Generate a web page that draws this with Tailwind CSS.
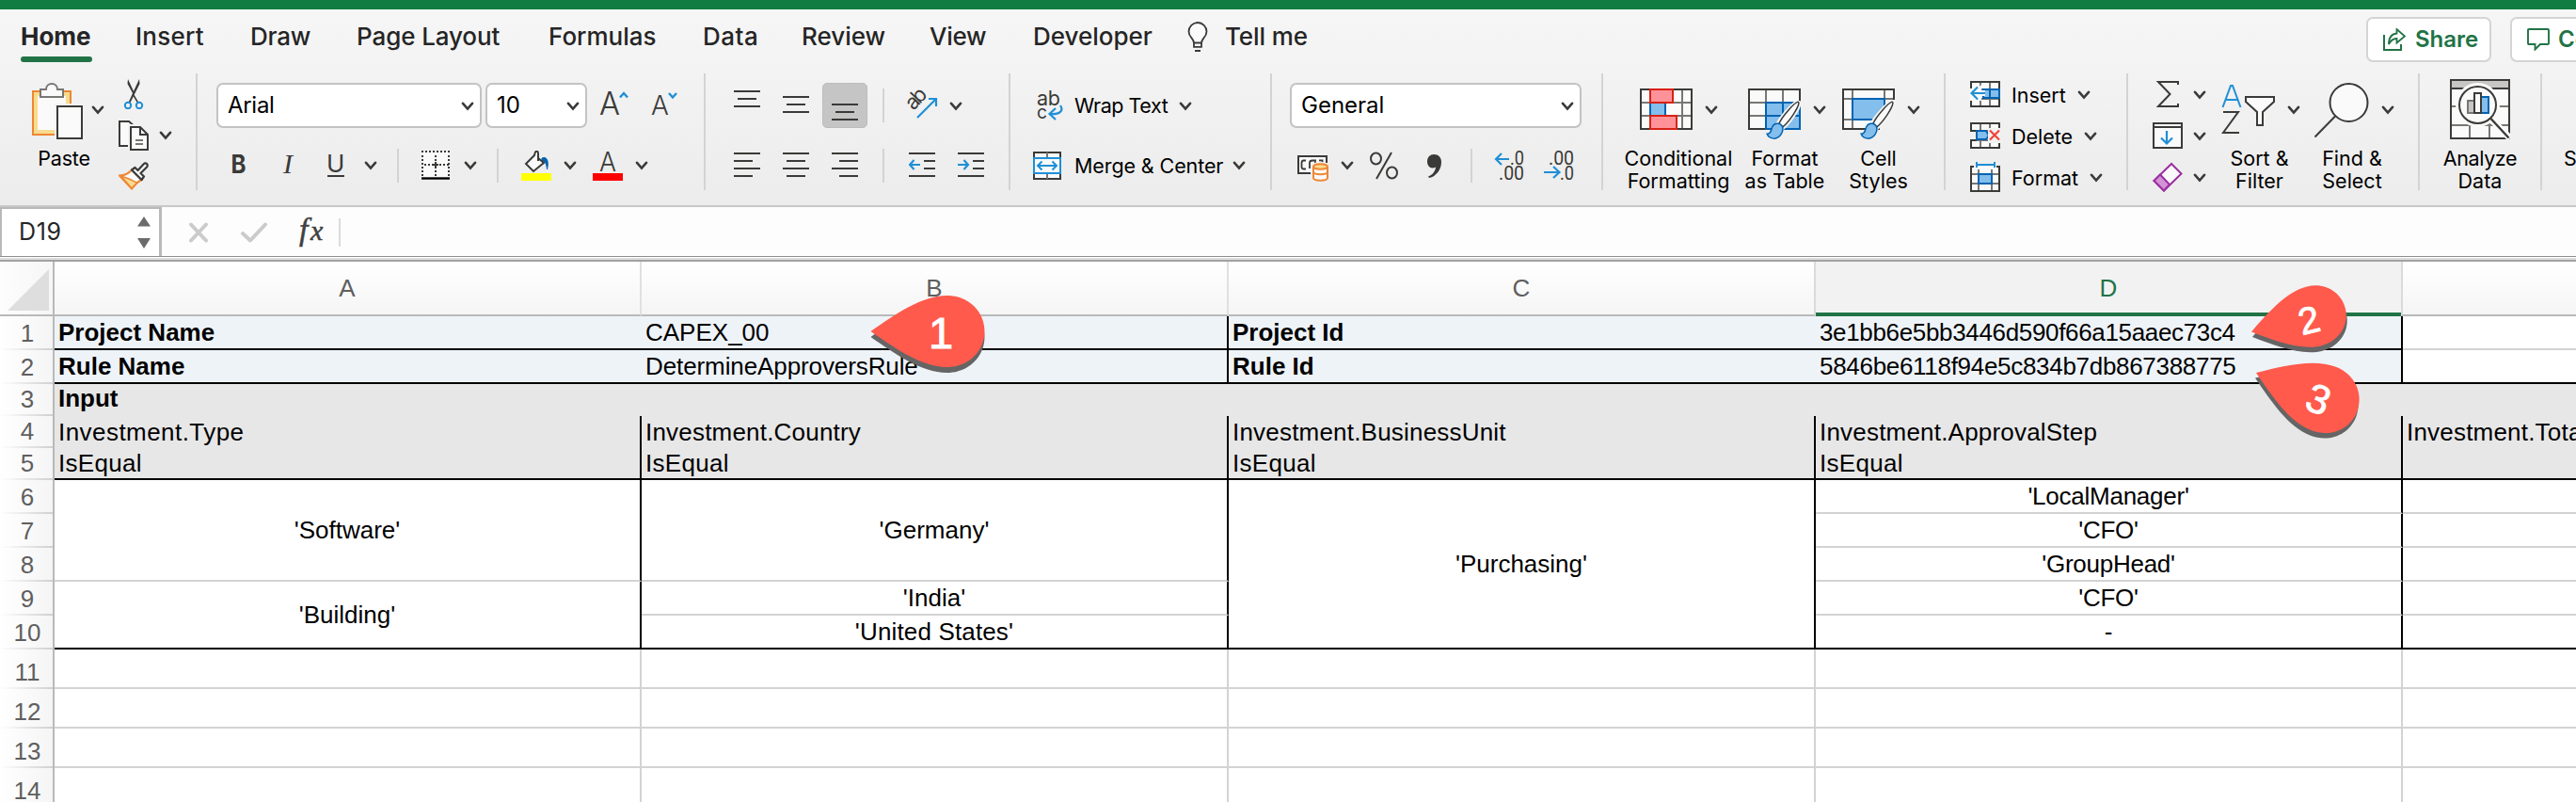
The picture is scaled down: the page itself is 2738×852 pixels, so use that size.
<!DOCTYPE html>
<html lang="en">
<head>
<meta charset="utf-8">
<title>Spreadsheet</title>
<script src="https://cdn.jsdelivr.net/npm/@tailwindcss/browser@4"></script>
</head>
<body class="bg-white">
<svg class="hidden">
  <symbol id="chev" viewBox="0 0 14 10"><path d="M2 1.800 7 7.600 12 1.800" fill="none" stroke="#3a3a38" stroke-width="2.600" stroke-linecap="round" stroke-linejoin="miter"/></symbol>
  <symbol id="brush" viewBox="0 0 48 56">
    <path d="M45 2C41 2 22 23 17 33L23 39C33 31 47 10 47 4Q47 2 45 2Z" fill="#fafafa" stroke="#f4f4f4" stroke-width="6"/>
    <path d="M45.500 1.500C41 2 23 22 18.500 32.500L23.500 37.500C33 30 46 10 46.500 3.500Q46.500 1.500 45.500 1.500Z" fill="#fafafa" stroke="#3a3a38" stroke-width="2"/>
    <path d="M1.500 47C8 47 7 41 9 37C12 31 20 31 23 36C26 43 20 54 11 53.500Q4 53 1.500 47Z" fill="#83beec" stroke="#0063b1" stroke-width="2"/>
  </symbol>
</svg>

<div class="flex h-screen w-full flex-col overflow-hidden bg-white font-['Inter',sans-serif] text-black">
  <div class="h-[10px] shrink-0 bg-[#107c41]"></div>

  <div class="h-[210px] shrink-0 border-b-2 border-[#c8c8c8] bg-linear-to-b from-[#f6f6f6] via-[#f1f1f1] to-[#ececec]">
    <!-- Tabs -->
    <nav class="flex h-[68px] items-start overflow-hidden pl-[22px] text-[26px] font-medium text-[#252525]">
      <div class="flex w-[122px] shrink-0 flex-col items-start"><span class="h-[50px] leading-[57px] font-bold">Home</span><span class="h-[6px] w-[76px] rounded-full bg-[#217346]"></span></div>
      <div class="w-[122px] shrink-0 leading-[57px] tracking-[0.25px]">Insert</div>
      <div class="w-[113px] shrink-0 leading-[57px] tracking-[-0.2px]">Draw</div>
      <div class="w-[204px] shrink-0 leading-[57px] tracking-[-0.1px]">Page Layout</div>
      <div class="w-[164px] shrink-0 leading-[57px]">Formulas</div>
      <div class="w-[105px] shrink-0 leading-[57px] tracking-[0.5px]">Data</div>
      <div class="w-[136px] shrink-0 leading-[57px]">Review</div>
      <div class="w-[110px] shrink-0 leading-[57px] tracking-[-0.3px]">View</div>
      <div class="w-[164px] shrink-0 leading-[57px]">Developer</div>
      <svg class="mt-[13px] h-[32px] w-[22px] shrink-0" viewBox="0 0 22 32" fill="none" stroke="#3a3a38" stroke-width="1.800"><path d="M7 22.500C7 18 1.500 16.500 1.500 10.500A9.500 9.500 0 0 1 20.500 10.500C20.500 16.500 15 18 15 22.500Z" fill="#fafafa"/><path d="M7 22V26.800H15V22"/><path d="M8 31H14" stroke-width="2"/></svg>
      <div class="ml-[18px] w-[1213px] shrink-0 leading-[57px] tracking-[-0.1px]">Tell me</div>
      <button class="mt-[8px] flex h-[48px] w-[133px] shrink-0 items-center rounded-[7px] border-2 border-[#d4d4d4] bg-white pl-[16px] text-2xl font-semibold text-[#217346]">
        <svg class="h-[24px] w-[24px]" viewBox="0 0 24 24" fill="none" stroke="#217346" stroke-width="2"><path d="M1 7V23H19V17"/><path d="M14.500 5.500V1L23 8.500 14.500 15.500V11C10.500 11 8 13 6 17C6 10 9 6 14.500 5.500Z" stroke-width="1.800"/></svg>
        <span class="ml-[10px]">Share</span>
      </button>
      <button class="mt-[8px] ml-[20px] flex h-[48px] w-[190px] shrink-0 items-center rounded-[7px] border-2 border-[#d4d4d4] bg-white pl-[16px] text-2xl font-semibold text-[#217346]">
        <svg class="h-[24px] w-[24px] shrink-0" viewBox="0 0 24 24" fill="none" stroke="#217346" stroke-width="1.900"><path d="M2 1H22Q23 1 23 2V16Q23 17 22 17H14L8.500 22.500V17H2Q1 17 1 16V2Q1 1 2 1Z"/></svg>
        <span class="ml-[9px]">Comments</span>
      </button>
    </nav>

    <!-- Command groups -->
    <div class="flex h-[124px] overflow-visible text-[21.5px] leading-[24px] *:shrink-0">
      <!-- Clipboard -->
      <section class="flex w-[210px] border-r-2 border-[#d3d3d3] pl-[24px]">
        <div class="w-[88px]">
          <div class="flex h-[78px] items-start pl-[10px]">
            <svg class="mt-[10px] h-[60px] w-[54px]" viewBox="0 0 54 60"><path d="M1 9H41V24H27V55H1Z" fill="#f8db8f" stroke="#ed8733" stroke-width="2"/><path d="M6 14H36V24H27V50H6Z" fill="#fafafa"/><path d="M9 7H15C15 3 18 1 21 1S27 3 27 7H33V15H9Z" fill="#fafafa" stroke="#797774" stroke-width="2"/><path d="M24 22H54V60H24Z" fill="#f2f2f2"/><path d="M27 25H53V59H27Z" fill="#fafafa" stroke="#3a3a38" stroke-width="2"/></svg>
            <svg class="mt-[34px] ml-[9px] h-[10px] w-[14px]"><use href="#chev"/></svg>
          </div>
          <div class="text-center tracking-[-0.2px]">Paste</div>
        </div>
        <div class="ml-[14px] flex flex-col gap-[12px] pt-[6px]">
          <svg class="ml-[5px] h-[32px] w-[22px]" viewBox="0 0 22 32"><path d="M5 0 11 13 17 0 17.500 5 7 26 5.500 25 10 15 4.500 5ZM11.500 16.500 16.500 25 15.500 26.500 10.500 18Z" fill="#3a3a38"/><circle cx="5" cy="28" r="3.200" fill="none" stroke="#1f8fd6" stroke-width="2"/><circle cx="17" cy="28" r="3.200" fill="none" stroke="#1f8fd6" stroke-width="2"/></svg>
          <div class="flex items-center"><svg class="h-[32px] w-[32px]" viewBox="0 0 32 32" stroke="#3a3a38" stroke-width="2"><path d="M10 27H1V1H11L15 4V27" fill="#fafafa" stroke="none"/><path d="M10 27H1V1H11L15 4.500" fill="none"/><path d="M10 4H16V32H10Z" fill="#f2f2f2" stroke="none"/><path d="M13 7H23L31 15V31H13Z" fill="#fafafa"/><path d="M23 7V15H31" fill="none"/><path d="M18 21H26M18 25H26" stroke="#797774"/></svg><svg class="ml-[11px] h-[10px] w-[14px]"><use href="#chev"/></svg></div>
          <svg class="h-[30px] w-[32px]" viewBox="0 0 32 30"><path d="M1 14.500C6 14.500 11 12 14 8.500L24.500 19C20 21 17 25 14 28.500Z" fill="#fafafa" stroke="#ed8733" stroke-width="2"/><path d="M3 15.500C9 16.500 12 18.500 19.500 22L14 28Z" fill="#f8db8f" stroke="#ed8733" stroke-width="1.500"/><path d="M14 8.500 17.500 6 20.500 9 27 2C29 0 32 3 30 5.500L23.500 12 27 15.500 24.500 19Z" fill="#fafafa" stroke="#3a3a38" stroke-width="2.200" stroke-linejoin="round"/></svg>
        </div>
      </section>

      <!-- Font -->
      <section class="w-[540px] border-r-2 border-[#d3d3d3] pt-[10px]">
        <div class="flex h-[48px] items-center pl-[20px]">
          <div class="flex h-[48px] w-[282px] items-center justify-between rounded-[7px] border-2 border-[#c3c3c3] bg-white pr-[6px] pl-[10px] text-2xl tracking-[-0.3px]">Arial<svg class="mt-[2px] h-[10px] w-[14px]"><use href="#chev"/></svg></div>
          <div class="ml-[4px] flex h-[48px] w-[108px] items-center justify-between rounded-[7px] border-2 border-[#c3c3c3] bg-white pr-[6px] pl-[10px] text-2xl">10<svg class="mt-[2px] h-[10px] w-[14px]"><use href="#chev"/></svg></div>
          <svg class="ml-[12px] h-[48px] w-[34px]"><text x="1" y="34" font-size="34.500" font-weight="300" fill="#3a3a38" textLength="22" lengthAdjust="spacingAndGlyphs">A</text><path d="M23 15.500 27 11 31 15.500" fill="none" stroke="#1f8fd6" stroke-width="2.400"/></svg>
          <svg class="ml-[22px] h-[48px] w-[30px]"><text x="0" y="34" font-size="28" font-weight="300" fill="#3a3a38">A</text><path d="M19 11 23 15.500 27 11" fill="none" stroke="#1f8fd6" stroke-width="2.400"/></svg>
        </div>
        <div class="mt-[16px] flex h-[48px] items-center">
          <svg class="ml-[34px] h-[48px] w-[20px]"><text x="1.500" y="32" font-size="26.500" font-weight="700" fill="#3a3a38" textLength="16" lengthAdjust="spacingAndGlyphs">B</text></svg>
          <svg class="ml-[32px] h-[48px] w-[20px]"><text x="5" y="32" font-size="30" font-family="Liberation Serif" font-style="italic" fill="#3a3a38">I</text></svg>
          <svg class="ml-[30px] h-[48px] w-[22px]"><text x="1" y="30.500" font-size="26" font-weight="400" fill="#3a3a38">U</text><path d="M2 35H20" stroke="#3a3a38" stroke-width="2"/></svg>
          <svg class="ml-[19px] h-[10px] w-[14px]"><use href="#chev"/></svg>
          <div class="ml-[21px] h-[36px] w-[2px] bg-[#d3d3d3]"></div>
          <svg class="ml-[23px] h-[32px] w-[32px]" viewBox="0 0 32 32"><path d="M1 1H31V28H1Z" fill="#fafafa"/><path d="M1 1H32M2 5V28M16 5V28M30 5V28M4 15H30" fill="none" stroke="#3a3a38" stroke-width="2" stroke-dasharray="2 2"/><path d="M13 15H19M16 12V18" stroke="#3a3a38" stroke-width="2"/><path d="M1 29.500H31" stroke="#000" stroke-width="2.400"/></svg>
          <svg class="ml-[14px] h-[10px] w-[14px]"><use href="#chev"/></svg>
          <div class="ml-[21px] h-[36px] w-[2px] bg-[#d3d3d3]"></div>
          <svg class="ml-[24px] h-[32px] w-[32px]" viewBox="0 0 32 32"><path d="M22 8C26 6 30 9 27.500 20C27 15 26 11 22 11Z" fill="#0063b1" stroke="#0063b1"/><path d="M14 5 5 14 13 22 24 13 18 8V3C18 0 15 0 14.500 3Z" fill="#fafafa" stroke="#3a3a38" stroke-width="2"/><path d="M18 3V11" stroke="#3a3a38" stroke-width="2"/><path d="M0 24H32V32H0Z" fill="#ff0"/></svg>
          <svg class="ml-[13px] h-[10px] w-[14px]"><use href="#chev"/></svg>
          <svg class="ml-[17px] h-[32px] w-[32px]" viewBox="0 0 32 32"><text x="16" y="22" text-anchor="middle" font-size="29" font-weight="300" fill="#3a3a38" textLength="18" lengthAdjust="spacingAndGlyphs">A</text><path d="M0 24H32V32H0Z" fill="#f00"/></svg>
          <svg class="ml-[13px] h-[10px] w-[14px]"><use href="#chev"/></svg>
        </div>
      </section>

      <!-- Alignment -->
      <section class="w-[324px] border-r-2 border-[#d3d3d3] pt-[10px]">
        <div class="flex h-[48px] items-center">
          <svg class="ml-[30px] h-[48px] w-[28px]" stroke="#3a3a38" stroke-width="2"><path d="M0 9H28M4 17H24M0 25H28"/></svg>
          <svg class="ml-[24px] h-[48px] w-[28px]" stroke="#3a3a38" stroke-width="2"><path d="M0 15H28M4 23H24M0 31H28"/></svg>
          <div class="ml-[14px] h-[48px] w-[48px] rounded-[5px] border border-[#bcbcbc] bg-[#c5c5c5] pl-[9px]"><svg class="h-[46px] w-[28px]" stroke="#3a3a38" stroke-width="2"><path d="M0 22H28M4 30H24M0 38H28"/></svg></div>
          <div class="ml-[16px] h-[36px] w-[2px] bg-[#d3d3d3]"></div>
          <svg class="ml-[22px] h-[48px] w-[36px]"><text transform="translate(9 30) rotate(-47)" font-size="22" font-weight="400" fill="#3a3a38" textLength="23">ab</text><path d="M13 37 33 17M25 17H33V25" fill="none" stroke="#1f8fd6" stroke-width="2.200"/></svg>
          <svg class="mt-[2px] ml-[11px] h-[10px] w-[14px]"><use href="#chev"/></svg>
        </div>
        <div class="mt-[16px] flex h-[48px] items-center">
          <svg class="ml-[30px] h-[48px] w-[28px]" stroke="#3a3a38" stroke-width="2"><path d="M0 11H28M0 19H20M0 27H28M0 35H20"/></svg>
          <svg class="ml-[24px] h-[48px] w-[28px]" stroke="#3a3a38" stroke-width="2"><path d="M0 11H28M4 19H24M0 27H28M4 35H24"/></svg>
          <svg class="ml-[24px] h-[48px] w-[28px]" stroke="#3a3a38" stroke-width="2"><path d="M0 11H28M8 19H28M0 27H28M8 35H28"/></svg>
          <div class="ml-[26px] h-[36px] w-[2px] bg-[#d3d3d3]"></div>
          <svg class="ml-[26px] h-[48px] w-[28px]" fill="none" stroke="#3a3a38" stroke-width="2"><path d="M0 11H28M16 19H28M16 27H28M0 35H28"/><path d="M12 23H1M5.500 18 1 23 5.500 28" stroke="#1f8fd6" stroke-width="2.200"/></svg>
          <svg class="ml-[24px] h-[48px] w-[28px]" fill="none" stroke="#3a3a38" stroke-width="2"><path d="M0 11H28M16 19H28M16 27H28M0 35H28"/><path d="M0 23H11M6.500 18 11 23 6.500 28" stroke="#1f8fd6" stroke-width="2.200"/></svg>
        </div>
      </section>

      <!-- Wrap and merge -->
      <section class="w-[278px] border-r-2 border-[#d3d3d3] pt-[10px]">
        <div class="flex h-[48px] items-center">
          <svg class="ml-[26px] h-[48px] w-[30px]"><text x="2" y="24" font-size="21.500" font-weight="400" fill="#3a3a38" textLength="25">ab</text><text x="2" y="38" font-size="20" font-weight="400" fill="#3a3a38" textLength="11" lengthAdjust="spacingAndGlyphs">c</text><path d="M27 24C31 30 26 34 16 33M22 27 15.500 33 22 39" fill="none" stroke="#1f8fd6" stroke-width="2.200"/></svg>
          <span class="ml-[12px] w-[111px] tracking-[-0.45px] whitespace-nowrap">Wrap Text</span>
          <svg class="mt-[2px] h-[10px] w-[14px]"><use href="#chev"/></svg>
        </div>
        <div class="mt-[16px] flex h-[48px] items-center">
          <svg class="ml-[24px] h-[30px] w-[30px]" viewBox="0 0 30 30" fill="#fafafa" stroke="#3a3a38" stroke-width="2"><path d="M1 1H29V29H1Z"/><path d="M15 1V7M15 23V29" stroke="#797774"/><path d="M1 7H29V23H1Z" stroke="#1f8fd6"/><path d="M5 15H25M9.500 10.500 5 15 9.500 19.500M20.500 10.500 25 15 20.500 19.500" fill="none" stroke="#1f8fd6"/></svg>
          <span class="ml-[14px] w-[168px] tracking-[-0.1px] whitespace-nowrap">Merge &amp; Center</span>
          <svg class="h-[10px] w-[14px]"><use href="#chev"/></svg>
        </div>
      </section>

      <!-- Number -->
      <section class="w-[352px] border-r-2 border-[#d3d3d3] pt-[10px]">
        <div class="ml-[19px] flex h-[48px] w-[310px] items-center justify-between rounded-[7px] border-2 border-[#c3c3c3] bg-white pr-[6px] pl-[10px] text-2xl">General<svg class="mt-[2px] h-[10px] w-[14px]"><use href="#chev"/></svg></div>
        <div class="mt-[16px] flex h-[48px] items-center">
          <svg class="mt-[6px] ml-[27px] h-[28px] w-[33px]" viewBox="0 0 33 28" fill="none" stroke="#3a3a38" stroke-width="2"><path d="M14 19H1V1H31V8" fill="#fafafa"/><path d="M9 5.500H6.500Q4.500 5.500 4.500 8V12Q4.500 14.500 6.500 14.500H9M13 14V8Q13 5.500 16 5.500H19V9M23 5.500H26.500V8" stroke-width="1.800"/><path d="M15 10Q24 3 33 10V28H15Z" fill="#f0f0f0" stroke="none"/><path d="M17 12V24C17 27.500 32 27.500 32 24V12" fill="#fafafa" stroke="#ed8733"/><ellipse cx="24.500" cy="12" rx="7.500" ry="2.800" fill="#f8db8f" stroke="#ed8733"/><path d="M17 17.500C17 21 32 21 32 17.500" stroke="#ed8733"/></svg>
          <svg class="ml-[13px] h-[10px] w-[14px]"><use href="#chev"/></svg>
          <svg class="ml-[16px] h-[48px] w-[32px]" fill="none" stroke="#3a3a38" stroke-width="2"><ellipse cx="7.500" cy="16.500" rx="5.500" ry="6"/><ellipse cx="24.500" cy="31.500" rx="5.500" ry="6"/><path d="M24 10 8 38"/></svg>
          <svg class="ml-[29px] h-[48px] w-[16px]" fill="#3a3a38"><path d="M8 12C13 12 16 15.500 16 20C16 28 11 35 3 37L2 35.500C7 33.500 9.500 30 10 25.500C5 28 1 25 1 19.500C1 15 4 12 8 12Z"/></svg>
          <div class="ml-[31px] h-[36px] w-[2px] bg-[#d3d3d3]"></div>
          <svg class="ml-[23px] h-[48px] w-[32px] font-['Roboto']" font-size="20" font-weight="400" fill="#3a3a38"><text x="17" y="22.500" textLength="15" lengthAdjust="spacingAndGlyphs">.0</text><text x="5" y="38.500" textLength="27" lengthAdjust="spacingAndGlyphs">.00</text><path d="M16 17H2M8 11 2 17 8 23" fill="none" stroke="#1f8fd6" stroke-width="2.200"/></svg>
          <svg class="ml-[20px] h-[48px] w-[33px] font-['Roboto']" font-size="20" font-weight="400" fill="#3a3a38"><text x="6" y="22.500" textLength="27" lengthAdjust="spacingAndGlyphs">.00</text><text x="18" y="38.500" textLength="15" lengthAdjust="spacingAndGlyphs">.0</text><path d="M1 31H17M11 25 17.500 31 11 37" fill="none" stroke="#1f8fd6" stroke-width="2.200"/></svg>
        </div>
      </section>

      <!-- Styles -->
      <section class="flex w-[364px] border-r-2 border-[#d3d3d3] pl-[16px] text-center">
        <div class="w-[128px]">
          <div class="flex h-[78px] items-start pl-[23px]">
            <svg class="mt-[16px] h-[44px] w-[56px]" viewBox="0 0 56 44" stroke-width="2"><path d="M1 1H55V43H1Z" fill="#fafafa"/><path d="M0 15H56M0 29H56M11 0V44M45 0V44" stroke="#797774"/><path d="M1 1H55V43H1Z" fill="none" stroke="#3a3a38"/><path d="M28 16H44V28H28Z" fill="#fafafa"/><path d="M11 15H27V29H11Z" fill="#83beec"/><path d="M27 15V29M11 15V29" stroke="#0063b1"/><path d="M11 1H35V15H11ZM11 29H39V43H11Z" fill="#ff9298" stroke="#d92015"/></svg>
            <svg class="mt-[34px] ml-[13px] h-[10px] w-[14px]"><use href="#chev"/></svg>
          </div>
          <div>Conditional<br>Formatting</div>
        </div>
        <div class="w-[98px]">
          <div class="flex h-[78px] items-start pl-[10px]">
            <svg class="mt-[16px] h-[54px] w-[60px]" viewBox="0 0 60 54" stroke-width="2"><path d="M1 1H55V43H1Z" fill="#fafafa"/><path d="M0 15H56M0 29H20M19 0V44M37 0V15" stroke="#797774"/><path d="M1 1H55V43H1Z" fill="none" stroke="#3a3a38"/><path d="M19 15H55V43H19Z" fill="#83beec" stroke="#0063b1"/><path d="M37 15V43M19 29H55" stroke="#0063b1"/><use href="#brush" x="14" y="13" width="46" height="42"/></svg>
            <svg class="mt-[34px] ml-[9px] h-[10px] w-[14px]"><use href="#chev"/></svg>
          </div>
          <div>Format<br>as Table</div>
        </div>
        <div class="ml-px w-[99px]">
          <div class="flex h-[78px] items-start pl-[11px]">
            <svg class="mt-[16px] h-[54px] w-[60px]" viewBox="0 0 60 54" stroke-width="2"><path d="M1 1H55V43H1Z" fill="#fafafa"/><path d="M0 11H56M0 33H56M11 0V44M45 0V44" stroke="#797774"/><path d="M1 1H55V43H1Z" fill="none" stroke="#3a3a38"/><path d="M40 34H58V46H40Z" fill="#f0f0f0"/><path d="M11 11H45V33H11Z" fill="#83beec" stroke="#0063b1"/><path d="M46 12H57V34H46Z" fill="#f2f2f2"/><use href="#brush" x="14" y="13" width="46" height="42"/></svg>
            <svg class="mt-[34px] ml-[9px] h-[10px] w-[14px]"><use href="#chev"/></svg>
          </div>
          <div>Cell<br>Styles</div>
        </div>
      </section>

      <!-- Cells -->
      <section class="w-[194px] border-r-2 border-[#d3d3d3] pt-px pl-[26px]">
        <div class="flex h-[44px] items-center">
          <svg class="mb-[2px] h-[28px] w-[32px]" viewBox="0 0 32 28" fill="none" stroke-width="2"><path d="M1 1H31V27H1Z" fill="#fafafa"/><path d="M11 1V27M21 1V27M1 9H31M1 19H31" stroke="#797774"/><path d="M1 1H31V27H1Z" stroke="#3a3a38"/><path d="M14 9H31V18H14Z" fill="#83beec" stroke="#0063b1"/><path d="M21 9V18" stroke="#0063b1"/><path d="M0 8H8L12 4V10H16V16H12V21H0Z" fill="#fafafa"/><path d="M16 13H2M8 6.500 1.500 13 8 19.500" stroke="#1f8fd6" stroke-width="2.200"/></svg>
          <span class="ml-[12px] w-[70px]">Insert</span><svg class="h-[10px] w-[14px]"><use href="#chev"/></svg>
        </div>
        <div class="flex h-[44px] items-center">
          <svg class="mb-[2px] h-[28px] w-[32px]" viewBox="0 0 32 28" fill="none" stroke-width="2"><path d="M1 1H31V27H1V19H7V9H1Z" fill="#fafafa"/><path d="M11 1V27M21 1V9M21 19V27M1 9H20M1 19H20" stroke="#797774"/><path d="M31 8V1H1V9H7M7 19H1V27H31V20" stroke="#3a3a38"/><path d="M7 9H17L20 14 17 18H7Z" fill="#83beec" stroke="#0063b1"/><path d="M19 6H32V22H19Z" fill="#f2f2f2"/><path d="M21 8.500 31 18.500M31 8.500 21 18.500" stroke="#f04438" stroke-width="2.200"/></svg>
          <span class="ml-[12px] w-[77px]">Delete</span><svg class="h-[10px] w-[14px]"><use href="#chev"/></svg>
        </div>
        <div class="flex h-[44px] items-center">
          <svg class="mb-[2px] h-[32px] w-[32px]" viewBox="0 0 32 32" fill="none" stroke-width="2"><path d="M1 5H31V31H1Z" fill="#fafafa"/><path d="M9 8V31M23 8V31M1 13H31M1 23H31" stroke="#797774"/><path d="M4 5H1V31H31V5H28" stroke="#3a3a38"/><path d="M9 13H23V23H9Z" fill="#83beec" stroke="#0063b1"/><path d="M7 0V6M26 0V6M7 3H26" stroke="#1f8fd6"/></svg>
          <span class="ml-[12px] w-[83px]">Format</span><svg class="h-[10px] w-[14px]"><use href="#chev"/></svg>
        </div>
      </section>

      <!-- Editing -->
      <section class="flex w-[310px] border-r-2 border-[#d3d3d3] pl-[26px]">
        <div class="pt-px">
          <div class="flex h-[44px] items-center"><svg class="mb-[2px] h-[28px] w-[32px]" fill="none" stroke="#3a3a38" stroke-width="2"><path d="M27 4V1H6L18.500 14 6 27H27V24"/></svg><svg class="ml-[11px] h-[10px] w-[14px]"><use href="#chev"/></svg></div>
          <div class="flex h-[44px] items-center"><svg class="mb-[2px] h-[28px] w-[32px]" fill="none" stroke="#3a3a38" stroke-width="2"><path d="M1 1H31V27H1Z" fill="#fafafa"/><path d="M1 5H31"/><path d="M15 9V22M9 16.500 15 22.500 21 16.500" stroke="#1f8fd6" stroke-width="2.200"/></svg><svg class="ml-[11px] h-[10px] w-[14px]"><use href="#chev"/></svg></div>
          <div class="flex h-[44px] items-center"><svg class="mb-[2px] h-[32px] w-[32px]" stroke="#9b2fa0" stroke-width="2"><path d="M20 2 30.500 12.500 12 30.500 1.500 20Z" fill="#fafafa"/><path d="M8 13.500 18 24 12 30.500 1.500 20Z" fill="#d392d6"/></svg><svg class="ml-[11px] h-[10px] w-[14px]"><use href="#chev"/></svg></div>
        </div>
        <div class="ml-[7px] w-[99px] text-center">
          <div class="flex h-[78px] items-start pl-[9px]">
            <svg class="mt-[12px] h-[54px] w-[58px]" viewBox="0 0 58 54" fill="none" stroke-width="2"><path d="M1.500 24 10 1H12L20.500 24M4.500 16H17.500" stroke="#1f8fd6"/><path d="M2 29H18L2 51H19" stroke="#3a3a38"/><path d="M26 13H56V18L44 29V43H38V29L26 18Z" fill="#fafafa" stroke="#3a3a38"/></svg>
            <svg class="mt-[34px] ml-[12px] h-[10px] w-[14px]"><use href="#chev"/></svg>
          </div>
          <div>Sort &amp;<br>Filter</div>
        </div>
        <div class="ml-px w-[96px] text-center">
          <div class="flex h-[78px] items-start pl-[7px]">
            <svg class="mt-[10px] h-[60px] w-[60px]" fill="none" stroke="#3a3a38" stroke-width="2"><circle cx="37.500" cy="21" r="20" fill="#fafafa"/><path d="M23.500 35 1.500 57.500"/></svg>
            <svg class="mt-[34px] ml-[12px] h-[10px] w-[14px]"><use href="#chev"/></svg>
          </div>
          <div>Find &amp;<br>Select</div>
        </div>
      </section>

      <!-- Analysis -->
      <section class="w-[130px] border-r-2 border-[#d3d3d3] text-center">
        <div class="flex h-[78px] items-start justify-center">
          <svg class="mt-[6px] h-[64px] w-[64px]" fill="none" stroke-width="2"><path d="M1 1H63V63H1Z" fill="#fafafa"/><path d="M1 1H63V10H1Z" fill="#c8c6c4"/><path d="M1 29H63M1 49H63M21 10V63M42 10V63" stroke="#797774"/><path d="M1 1H63V63H1ZM1 10H63" stroke="#3a3a38"/><circle cx="29.500" cy="27.500" r="21.500" fill="#fafafa" stroke="#fafafa" stroke-width="4"/><path d="M44 43 64 63" stroke="#fafafa" stroke-width="7"/><circle cx="29.500" cy="27.500" r="19.500" stroke="#3a3a38"/><path d="M43.500 42 62.500 62.500" stroke="#3a3a38" stroke-width="2.400"/><path d="M19 23H26V36H19Z" fill="#c8c6c4" stroke="#797774"/><path d="M33 19H41V36H33Z" fill="#83beec" stroke="#0063b1"/><path d="M26 15H33V36H26Z" fill="#fafafa" stroke="#3a3a38"/></svg>
        </div>
        <div class="tracking-[-0.4px]">Analyze<br><span class="tracking-normal">Data</span></div>
      </section>
      <section class="w-[36px] overflow-hidden pt-[78px] pl-[23px]">Sensitivity</section>
    </div>
  </div>

  <!-- Formula bar -->
  <div class="flex h-[52px] shrink-0 items-stretch bg-[#fdfdfd]">
    <div class="flex w-[172px] items-center border-2 border-r-[3px] border-b-0 border-[#b9b9b9] bg-white pl-[18px] text-[25px] tracking-[0.6px] text-[#252525]">
      <span class="-mt-[3px] w-[126px] leading-[50px]">D19</span>
      <svg class="h-[34px] w-[14px]" fill="#6b6b6b"><path d="M7 0 14 10.500H0ZM7 34 14 23H0Z"/></svg>
    </div>
    <svg class="mt-[16px] ml-[28px] h-[22px] w-[22px]" stroke="#cbcbcb" stroke-width="4" stroke-linecap="round"><path d="M3 2.500 19 19.500M19 2.500 3 19.500"/></svg>
    <svg class="mt-[16px] ml-[33px] h-[22px] w-[30px]" fill="none" stroke="#cbcbcb" stroke-width="4" stroke-linecap="round" stroke-linejoin="round"><path d="M3 12 11 19.500 27 2.500"/></svg>
    <svg class="mt-[8px] ml-[29px] h-[36px] w-[36px]" font-family="Liberation Serif" font-style="italic" fill="#404040" stroke="#404040" stroke-width="0.500"><text x="4" y="27" font-size="34">f</text><text x="16" y="27" font-size="30">x</text></svg>
    <div class="mt-[12px] ml-[10px] h-[30px] w-[2px] bg-[#dcdcdc]"></div>
  </div>
  <div class="h-[6px] shrink-0 border-t border-b-2 border-t-[#8e8e8e] border-b-[#a2a2a2] bg-linear-to-b from-white from-30% to-[#dedede] to-35%"></div>

  <!-- Sheet -->
  <div class="relative grid shrink-0 grid-cols-[58px_624px_624px_624px_624px_200px] grid-rows-[58px_36px_36px_34px_34px_34px_36px_36px_36px_36px_36px_42px_42px_42px_42px] font-['Liberation_Sans',Arial,sans-serif] text-[26px] leading-[31px] whitespace-nowrap">
    <div class="flex items-end justify-end border-r-2 border-b-2 border-[#b9b9b9] bg-linear-to-r from-[#fdfdfd] to-[#f6f6f6] pr-[4px] pb-[4px]"><svg class="h-[44px] w-[44px]"><path d="M44 0V44H0Z" fill="#dedede"/></svg></div>
    <div class="flex items-center justify-center border-r-2 border-b-2 border-r-[#e0e0e0] border-b-[#b9b9b9] bg-linear-to-b from-white to-[#f5f5f5] pt-px text-[#5f5f5f]">A</div>
    <div class="flex items-center justify-center border-r-2 border-b-2 border-r-[#e0e0e0] border-b-[#b9b9b9] bg-linear-to-b from-white to-[#f5f5f5] pt-px text-[#5f5f5f]">B</div>
    <div class="flex items-center justify-center border-r-2 border-b-2 border-r-[#dadada] border-b-[#b9b9b9] bg-linear-to-b from-white to-[#f5f5f5] pt-px text-[#5f5f5f]">C</div>
    <div class="flex items-center justify-center border-b-4 border-[#217346] bg-[#f2f2f2] pt-[3px] pr-[2px] text-[#217346]">D</div>
    <div class="-ml-[2px] border-b-2 border-l-2 border-b-[#b9b9b9] border-l-[#dadada] bg-linear-to-b from-white to-[#f5f5f5]"></div>

    <!-- Row numbers -->
    <div class="col-start-1 row-start-2 row-end-16 grid grid-rows-subgrid border-r-2 border-[#b9b9b9] bg-linear-to-r from-white to-[#f5f5f5] text-center text-[#5f5f5f] *:flex *:items-end *:justify-center *:border-b-2 *:pl-[2px] *:[border-image:linear-gradient(to_right,#ffffff,#cfcfcf)_1]">
      <div>1</div><div>2</div><div>3</div><div>4</div><div>5</div><div>6</div><div>7</div><div>8</div><div>9</div><div>10</div><div>11</div><div>12</div><div>13</div><div>14</div>
    </div>

    <!-- Rows 1 and 2 -->
    <div class="col-start-2 row-start-2 flex items-center border-b-2 border-black bg-[#eef3f8] pl-[4px] font-bold">Project Name</div>
    <div class="col-start-3 row-start-2 flex items-center border-r-2 border-b-2 border-black bg-[#eef3f8] pl-[4px]">CAPEX_00</div>
    <div class="col-start-4 row-start-2 flex items-center border-b-2 border-black bg-[#eef3f8] pl-[4px] font-bold">Project Id</div>
    <div class="col-start-5 row-start-2 flex items-center border-r-2 border-b-2 border-black bg-[#eef3f8] pl-[4px] tracking-[-0.34px]">3e1bb6e5bb3446d590f66a15aaec73c4</div>
    <div class="col-start-6 row-start-2 border-b-2 border-[#d3d3d3]"></div>
    <div class="col-start-2 row-start-3 flex items-center border-b-2 border-black bg-[#eef3f8] pl-[4px] font-bold">Rule Name</div>
    <div class="col-start-3 row-start-3 flex items-center border-r-2 border-b-2 border-black bg-[#eef3f8] pl-[4px] tracking-[-0.1px]">DetermineApproversRule</div>
    <div class="col-start-4 row-start-3 flex items-center border-b-2 border-black bg-[#eef3f8] pl-[4px] font-bold">Rule Id</div>
    <div class="col-start-5 row-start-3 flex items-center border-r-2 border-b-2 border-black bg-[#eef3f8] pl-[4px] tracking-[-0.3px]">5846be6118f94e5c834b7db867388775</div>
    <div class="col-start-6 row-start-3 border-b-2 border-black"></div>

    <!-- Condition header -->
    <div class="col-span-5 col-start-2 row-start-4 flex items-center bg-[#e7e7e7] pb-[3px] pl-[4px] font-bold">Input</div>
    <div class="col-start-2 row-span-2 row-start-5 grid grid-rows-2 items-center border-r-2 border-b-2 border-black bg-[#e7e7e7] pl-[4px] leading-[34px]"><div class="tracking-[0.45px]">Investment.Type</div><div class="tracking-[0.3px]">IsEqual</div></div>
    <div class="col-start-3 row-span-2 row-start-5 grid grid-rows-2 items-center border-r-2 border-b-2 border-black bg-[#e7e7e7] pl-[4px] leading-[34px]"><div class="tracking-[0.2px]">Investment.Country</div><div class="tracking-[0.3px]">IsEqual</div></div>
    <div class="col-start-4 row-span-2 row-start-5 grid grid-rows-2 items-center border-r-2 border-b-2 border-black bg-[#e7e7e7] pl-[4px] leading-[34px]"><div class="tracking-[0.2px]">Investment.BusinessUnit</div><div class="tracking-[0.3px]">IsEqual</div></div>
    <div class="col-start-5 row-span-2 row-start-5 grid grid-rows-2 items-center border-r-2 border-b-2 border-black bg-[#e7e7e7] pl-[4px] leading-[34px]"><div class="tracking-[0.2px]">Investment.ApprovalStep</div><div class="tracking-[0.3px]">IsEqual</div></div>
    <div class="col-start-6 row-span-2 row-start-5 overflow-hidden border-b-2 border-black bg-[#e7e7e7] pl-[4px] leading-[34px] tracking-[0.2px]">Investment.TotalCost</div>

    <!-- Conditions -->
    <div class="col-start-2 row-span-3 row-start-7 flex items-center justify-center border-r-2 border-b-2 border-r-black border-b-[#d3d3d3]">'Software'</div>
    <div class="col-start-2 row-span-2 row-start-10 flex items-center justify-center border-r-2 border-b-2 border-black">'Building'</div>
    <div class="col-start-3 row-span-3 row-start-7 flex items-center justify-center border-r-2 border-b-2 border-r-black border-b-[#d3d3d3]">'Germany'</div>
    <div class="col-start-3 row-start-10 flex items-center justify-center border-r-2 border-b-2 border-r-black border-b-[#d3d3d3]">'India'</div>
    <div class="col-start-3 row-start-11 flex items-center justify-center border-r-2 border-b-2 border-black tracking-[0.15px]">'United States'</div>
    <div class="col-start-4 row-span-5 row-start-7 flex items-center justify-center border-r-2 border-b-2 border-black">'Purchasing'</div>
    <div class="col-start-5 row-start-7 flex items-center justify-center border-r-2 border-b-2 border-r-black border-b-[#d3d3d3] tracking-[-0.25px]">'LocalManager'</div>
    <div class="col-start-5 row-start-8 flex items-center justify-center border-r-2 border-b-2 border-r-black border-b-[#d3d3d3] tracking-[-0.25px]">'CFO'</div>
    <div class="col-start-5 row-start-9 flex items-center justify-center border-r-2 border-b-2 border-r-black border-b-[#d3d3d3] tracking-[-0.25px]">'GroupHead'</div>
    <div class="col-start-5 row-start-10 flex items-center justify-center border-r-2 border-b-2 border-r-black border-b-[#d3d3d3] tracking-[-0.25px]">'CFO'</div>
    <div class="col-start-5 row-start-11 flex items-center justify-center border-r-2 border-b-2 border-black">-</div>
    <div class="col-start-6 row-start-7 border-b-2 border-[#d3d3d3]"></div>
    <div class="col-start-6 row-start-8 border-b-2 border-[#d3d3d3]"></div>
    <div class="col-start-6 row-start-9 border-b-2 border-[#d3d3d3]"></div>
    <div class="col-start-6 row-start-10 border-b-2 border-[#d3d3d3]"></div>
    <div class="col-start-6 row-start-11 border-b-2 border-black"></div>

    <!-- Empty rows -->
    <div class="col-start-2 col-end-7 row-start-12 row-end-16 grid grid-cols-subgrid grid-rows-subgrid *:border-r-2 *:border-b-2 *:border-[#d3d3d3]">
      <div></div><div></div><div></div><div></div><div></div>
      <div></div><div></div><div></div><div></div><div></div>
      <div></div><div></div><div></div><div></div><div></div>
      <div></div><div></div><div></div><div></div><div></div>
    </div>

    <!-- Callout markers -->
    <svg class="absolute top-0 left-[900px] h-[200px] w-[1638px]" viewBox="900 278 1638 200">
      <defs><path id="drop" d="M0 0C26-18 54-38 81-38C104-38 121-21 121 0C121 21 104 38 81 38C54 38 26 18 0 0Z"/></defs>
      <g fill="#656565">
        <use href="#drop" transform="translate(925.500 358)"/>
        <use href="#drop" transform="translate(2394 358) rotate(-14) scale(.85)"/>
        <use href="#drop" transform="translate(2397 401.500) rotate(21) scale(.95)"/>
      </g>
      <g fill="#ff5a4c">
        <use href="#drop" transform="translate(925.500 352)"/>
        <use href="#drop" transform="translate(2393 352.500) rotate(-14) scale(.85)"/>
        <use href="#drop" transform="translate(2398 396) rotate(21) scale(.95)"/>
      </g>
      <g fill="#fff" stroke="#fff" stroke-width="0.900" text-anchor="middle" font-size="47">
        <text transform="translate(1000 369.500)">1</text>
        <text transform="translate(2457.500 353.500) rotate(-14) scale(.85)">2</text>
        <text transform="translate(2459 438) rotate(21) scale(.92)">3</text>
      </g>
    </svg>
  </div>
</div>
</body>
</html>
